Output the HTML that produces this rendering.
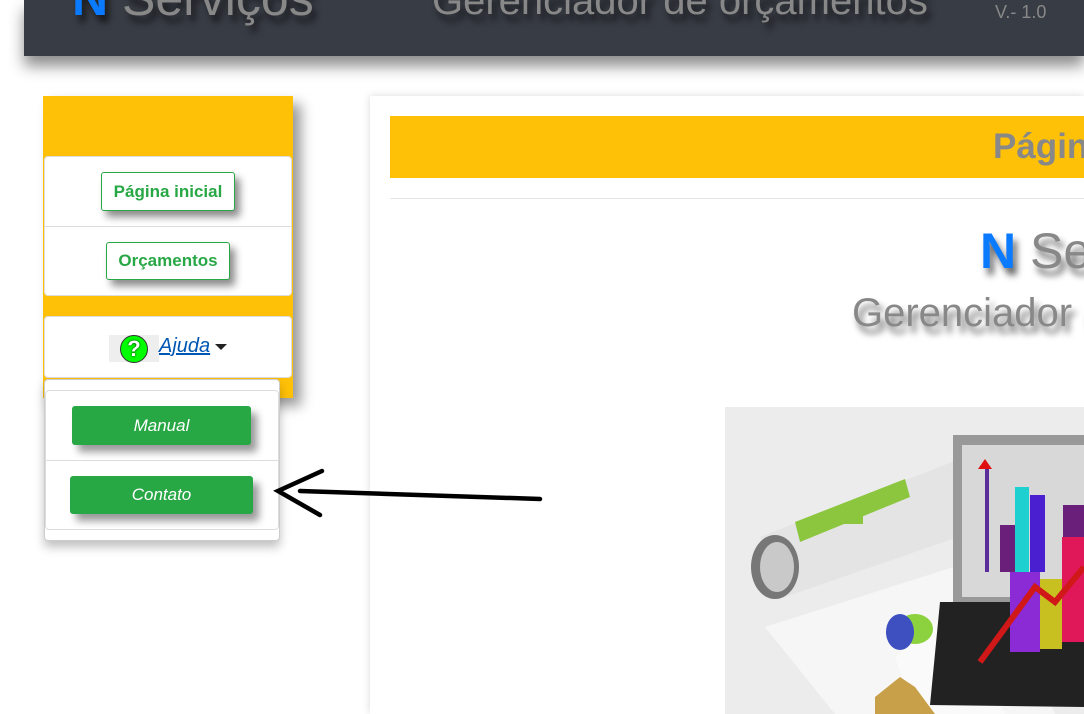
<!DOCTYPE html>
<html><head><meta charset="utf-8"><style>
*{box-sizing:border-box;margin:0;padding:0}
html,body{width:1084px;height:714px;overflow:hidden}
body{background:#fff;font-family:"Liberation Sans",sans-serif;position:relative}
.abs{position:absolute}
.clip{position:absolute;left:0;top:0;width:1084px;height:714px;overflow:hidden}
.hdr{left:24px;top:0;width:1060px;height:56px;background:#383c44;box-shadow:0 10px 14px rgba(0,0,0,.45)}
.sh{text-shadow:4px 7px 7px rgba(0,0,0,.6)}
.gbtn{position:absolute;border:1px solid #28a745;border-radius:3px;background:#fff;color:#28a745;font-weight:bold;font-size:17px;text-align:center;box-shadow:5px 6px 8px rgba(0,0,0,.45)}
.fbtn{position:absolute;background:#28a745;color:#fff;font-style:italic;font-size:17px;text-align:center;border-radius:3px;box-shadow:6px 7px 8px rgba(0,0,0,.4)}
</style></head><body>
<div class="clip">
<div class="abs hdr"></div>
<div class="abs sh" style="left:72px;top:-27px;font-size:50px;line-height:50px;color:#888;white-space:nowrap"><span style="color:#0a7bff;font-weight:bold">N</span> Serviços</div>
<div class="abs sh" style="left:432px;top:-19px;font-size:40px;line-height:40px;color:#888;white-space:nowrap">Gerenciador de orçamentos</div>
<div class="abs" style="left:995px;top:2px;font-size:18px;color:#888">V.- 1.0</div>

<div class="abs" style="left:43px;top:96px;width:250px;height:302px;background:#ffc107;box-shadow:8px 8px 12px rgba(0,0,0,.4)"></div>
<div class="abs" style="left:44px;top:156px;width:248px;height:140px;background:#fff;border:1px solid #ddd;border-radius:4px"></div>
<div class="abs" style="left:44px;top:226px;width:248px;height:1px;background:#ddd"></div>
<div class="gbtn" style="left:101px;top:172px;width:134px;height:39px;line-height:37px">Página inicial</div>
<div class="gbtn" style="left:106px;top:242px;width:124px;height:38px;line-height:36px">Orçamentos</div>
<div class="abs" style="left:44px;top:316px;width:248px;height:62px;background:#fff;border:1px solid #ddd;border-radius:4px"></div>
<div class="abs" style="left:109px;top:335px;width:50px;height:27px;background:#eee"></div>
<div class="abs" style="left:120px;top:335px;width:28px;height:28px;border-radius:50%;background:#0f0;border:1px solid #333;color:#fff;font-weight:bold;font-size:22px;text-align:center;line-height:26px;text-shadow:0 0 2px #000">?</div>
<div class="abs" style="left:159px;top:335px;font-size:20px;font-style:italic;color:#0056b3;text-decoration:underline">Ajuda</div>
<div class="abs" style="left:215px;top:344px;border-left:6px solid transparent;border-right:6px solid transparent;border-top:6px solid #222"></div>
<div class="abs" style="left:44px;top:379px;width:236px;height:162px;background:#fff;border:1px solid #ccc;border-radius:4px;box-shadow:0 6px 10px rgba(0,0,0,.25)"></div>
<div class="abs" style="left:45px;top:390px;width:234px;height:140px;border:1px solid #ddd;border-radius:4px"></div>
<div class="abs" style="left:45px;top:460px;width:234px;height:1px;background:#ddd"></div>
<div class="fbtn" style="left:72px;top:406px;width:179px;height:39px;line-height:39px">Manual</div>
<div class="fbtn" style="left:70px;top:476px;width:183px;height:38px;line-height:38px">Contato</div>

<div class="abs" style="left:370px;top:96px;width:714px;height:618px;background:#fff;box-shadow:0 0 8px rgba(0,0,0,.15)"></div>
<div class="abs" style="left:390px;top:116px;width:694px;height:62px;background:#ffc107"></div>
<div class="abs" style="left:993px;top:127px;font-size:35px;font-weight:bold;color:#888;white-space:nowrap">Página inicial</div>
<div class="abs" style="left:390px;top:198px;width:694px;height:1px;background:#e5e5e5"></div>
<div class="abs sh" style="left:980px;top:222px;font-size:50px;color:#888;white-space:nowrap"><span style="color:#0a7bff;font-weight:bold">N</span> Serviços</div>
<div class="abs sh" style="left:852px;top:291px;font-size:40px;color:#888;white-space:nowrap">Gerenciador de orçamentos</div>

<svg class="abs" style="left:725px;top:407px" width="359" height="307">
<rect width="359" height="307" fill="#ececec"/>
<polygon points="40,220 260,150 330,307 110,307" fill="#f6f6f6"/>
<polygon points="35,130 240,50 262,120 60,190" fill="#e4e4e4"/>
<ellipse cx="50" cy="160" rx="24" ry="32" fill="#777"/>
<ellipse cx="52" cy="160" rx="17" ry="25" fill="#c9c9c9"/>
<polygon points="70,115 180,72 185,90 75,135" fill="#8cc63f"/>
<rect x="98" y="107" width="40" height="10" fill="#8cc63f"/>
<polygon points="170,250 230,200 280,307 190,307" fill="#fafafa"/>
<ellipse cx="190" cy="222" rx="18" ry="15" fill="#8cd23f"/>
<ellipse cx="175" cy="225" rx="14" ry="18" fill="#3e4fc0"/>
<polygon points="150,290 175,270 190,280 210,307 150,307" fill="#c9a04a"/>
<rect x="228" y="28" width="131" height="170" fill="#999"/>
<rect x="237" y="38" width="122" height="152" fill="#d8d8d8"/>
<polygon points="215,195 359,195 359,300 205,298" fill="#222"/>
<rect x="260" y="60" width="4" height="105" fill="#5a2d9a"/>
<rect x="275" y="118" width="15" height="47" fill="#6a1f7a"/>
<rect x="290" y="80" width="14" height="85" fill="#1fd0d0"/>
<rect x="305" y="88" width="15" height="77" fill="#4a1fd0"/>
<rect x="338" y="98" width="21" height="67" fill="#6a1f7a"/>
<rect x="285" y="165" width="30" height="80" fill="#8a2bd6"/>
<rect x="315" y="172" width="22" height="70" fill="#c8c020"/>
<rect x="337" y="130" width="22" height="105" fill="#e0185a"/>
<path d="M255 255 L310 180 L330 195 L359 160" stroke="#d01818" stroke-width="6" fill="none"/>
<polygon points="253,62 267,62 260,52" fill="#e01010"/>
</svg>

<svg class="abs" style="left:270px;top:465px" width="280" height="55"><g stroke="#000" stroke-width="4.5" fill="none" stroke-linecap="round"><path d="M270 34 L30 26"/><path d="M52 6 L8 26 L50 50"/></g></svg>
</div>
</body></html>
